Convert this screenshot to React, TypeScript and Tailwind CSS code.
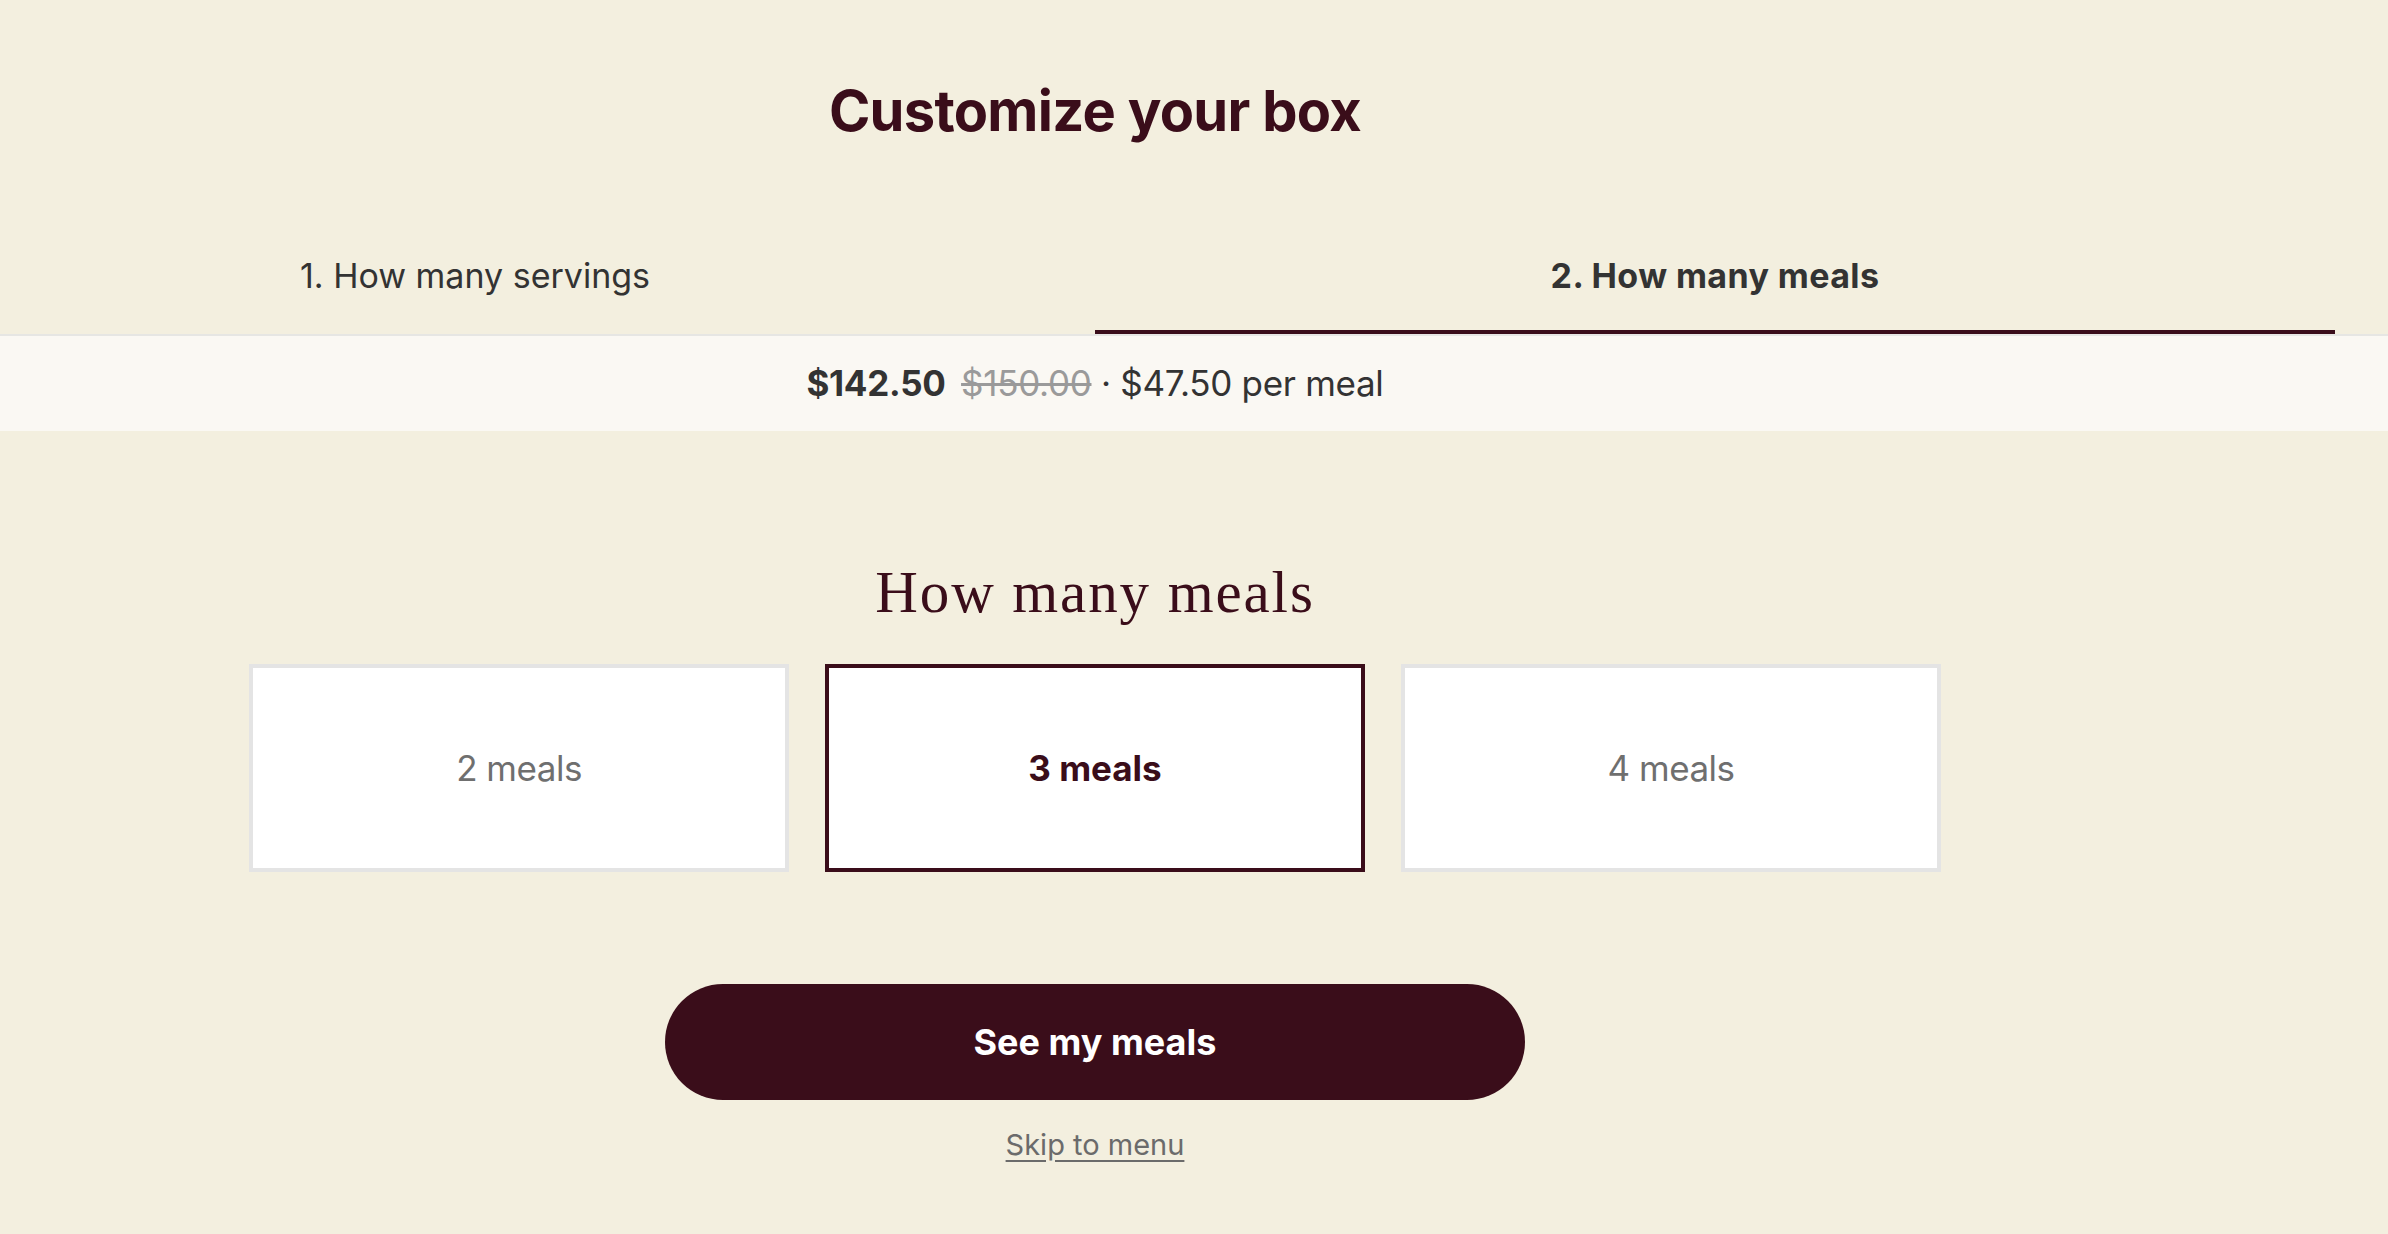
import React, { useState } from 'react';

const sans = { fontFamily: 'Inter, "Liberation Sans", sans-serif' };

const mealOptions = [2, 3, 4];

const App: React.FC = () => {
  const [meals, setMeals] = useState(3);
  const [tab, setTab] = useState(2);

  return (
    <div className="min-h-screen w-full overflow-hidden bg-[#f3efdf]" style={sans}>
      <div className="w-[2190px]">
        <h1 className="pt-[83px] text-center text-[56px] font-bold leading-none tracking-[-0.7px] text-[#3a0d1a]">
          Customize your box
        </h1>

        <div className="mt-[120px] -ml-[145px] flex">
          <button
            onClick={() => setTab(1)}
            className={`w-[1240px] shrink-0 pb-[37px] text-[34px] leading-none text-[#333333] border-b-4 ${
              tab === 1 ? 'font-bold tracking-[0.4px] border-[#3a0d1a]' : 'border-transparent'
            }`}
          >
            1. How many servings
          </button>
          <button
            onClick={() => setTab(2)}
            className={`w-[1240px] shrink-0 pb-[37px] text-[34px] leading-none text-[#333333] border-b-4 ${
              tab === 2 ? 'font-bold tracking-[0.4px] border-[#3a0d1a]' : 'border-transparent'
            }`}
          >
            2. How many meals
          </button>
        </div>
      </div>

      <div className="w-full border-t-2 border-[#e6e6e3] bg-[#faf8f3]">
        <div className="w-[2190px] py-[30px] text-center text-[35px] leading-none tracking-[-0.3px] text-[#333333]">
          <span className="font-bold">$142.50</span>{' '}
          <span className="ml-[6px] text-[#9a9a9a] line-through">$150.00</span>
          <span> · $47.50 per meal</span>
        </div>
      </div>

      <div className="w-[2190px] flex flex-col items-center">
        <h2
          className="mt-[132px] text-[59px] leading-none tracking-[1.9px] text-[#3a0d1a]"
          style={{ fontFamily: '"Liberation Serif", "DejaVu Serif", serif' }}
        >
          How many meals
        </h2>

        <div className="mt-[42px] flex gap-[36px]">
          {mealOptions.map((n) => {
            const active = n === meals;
            return (
              <button
                key={n}
                onClick={() => setMeals(n)}
                className={`flex h-[208px] w-[540px] items-center justify-center border-4 bg-white text-[35px] leading-none ${
                  active
                    ? 'border-[#3a0d1a] font-bold text-[#3a0d1a]'
                    : 'border-[#e4e4e4] tracking-[-0.5px] text-[#6f6f6f]'
                }`}
              >
                {n} meals
              </button>
            );
          })}
        </div>

        <button className="mt-[112px] h-[116px] w-[860px] rounded-full bg-[#3a0d1a] text-[36px] font-bold leading-none text-white">
          See my meals
        </button>

        <a
          href="#"
          className="mt-[30px] text-[29px] leading-none text-[#6b6b6b] underline underline-offset-[5px]"
        >
          Skip to menu
        </a>
      </div>
    </div>
  );
};

export default App;
